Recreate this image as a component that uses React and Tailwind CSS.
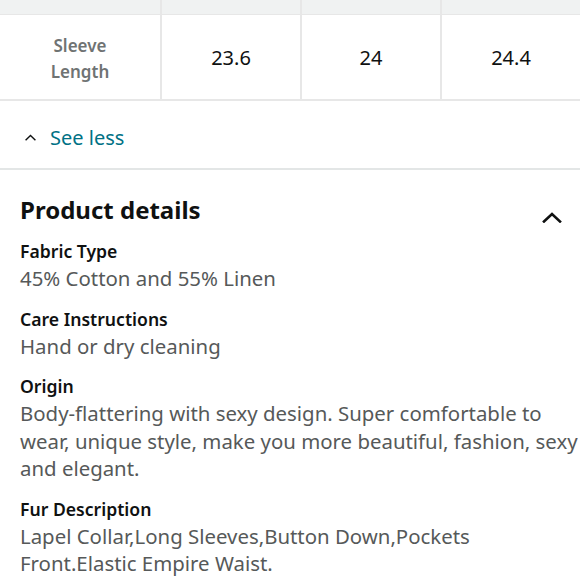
const sizes = ["23.6", "24", "24.4"];

const details = [
  { label: "Fabric Type", value: "45% Cotton and 55% Linen" },
  { label: "Care Instructions", value: "Hand or dry cleaning" },
  {
    label: "Origin",
    value:
      "Body-flattering with sexy design. Super comfortable to wear, unique style, make you more beautiful, fashion, sexy and elegant.",
  },
  {
    label: "Fur Description",
    value: "Lapel Collar,Long Sleeves,Button Down,Pockets Front.Elastic Empire Waist.",
  },
];

const Caret = ({ className }) => (
  <svg viewBox="0 0 20 11" fill="none" stroke="currentColor" className={className}>
    <polyline points="2,9.5 10,2 18,9.5" strokeWidth="2.6" strokeLinecap="square" />
  </svg>
);

export default function App() {
  return (
    <div className="w-[580px] h-[580px] overflow-hidden bg-white text-[#0f1111] font-['Noto_Sans',sans-serif]">
      {/* size chart tail */}
      <div className="grid grid-cols-[160px_1fr_1fr_1fr] border-b-2 border-[#e7e7e7]">
        <div className="h-[15px] bg-[#f0f2f2] border-b border-[#e7e7e7]" />
        <div className="h-[15px] bg-[#f0f2f2] border-b border-l-2 border-[#e7e7e7]" />
        <div className="h-[15px] bg-[#f0f2f2] border-b border-l-2 border-[#e7e7e7]" />
        <div className="h-[15px] bg-[#f0f2f2] border-b border-l-2 border-[#e7e7e7]" />
        <div className="h-[84px] pt-[4px] flex items-center justify-center text-center text-[17px] leading-[26px] font-semibold text-[#6f7373]">
          Sleeve
          <br />
          Length
        </div>
        {sizes.map((s) => (
          <div
            key={s}
            className="h-[84px] pt-[2px] flex items-center justify-center border-l-2 border-[#e7e7e7] text-[20px]"
          >
            {s}
          </div>
        ))}
      </div>

      <div className="h-[69px] pt-[6px] flex items-center pl-[25px] gap-[14px] border-b-2 border-[#e3e6e6]">
        <Caret className="w-[11px] h-[7px] text-[#0f1111]" />
        <span className="text-[20px] text-[#007185]">See less</span>
      </div>

      <div className="pl-5 pt-[24px]">
        <div className="flex items-center justify-between pr-[18px]">
          <h2 className="text-[24px] font-bold leading-[32px]">Product details</h2>
          <Caret className="w-[20px] h-[11px] mt-[14px]" />
        </div>
        <div className="mt-[12px] flex flex-col gap-[13px]">
          {details.map((d) => (
            <div key={d.label}>
              <div className="text-[17.6px] font-semibold leading-[27px]">{d.label}</div>
              <div className="text-[20.4px] leading-[27.5px] text-[#565959]">{d.value}</div>
            </div>
          ))}
        </div>
      </div>
    </div>
  );
}
